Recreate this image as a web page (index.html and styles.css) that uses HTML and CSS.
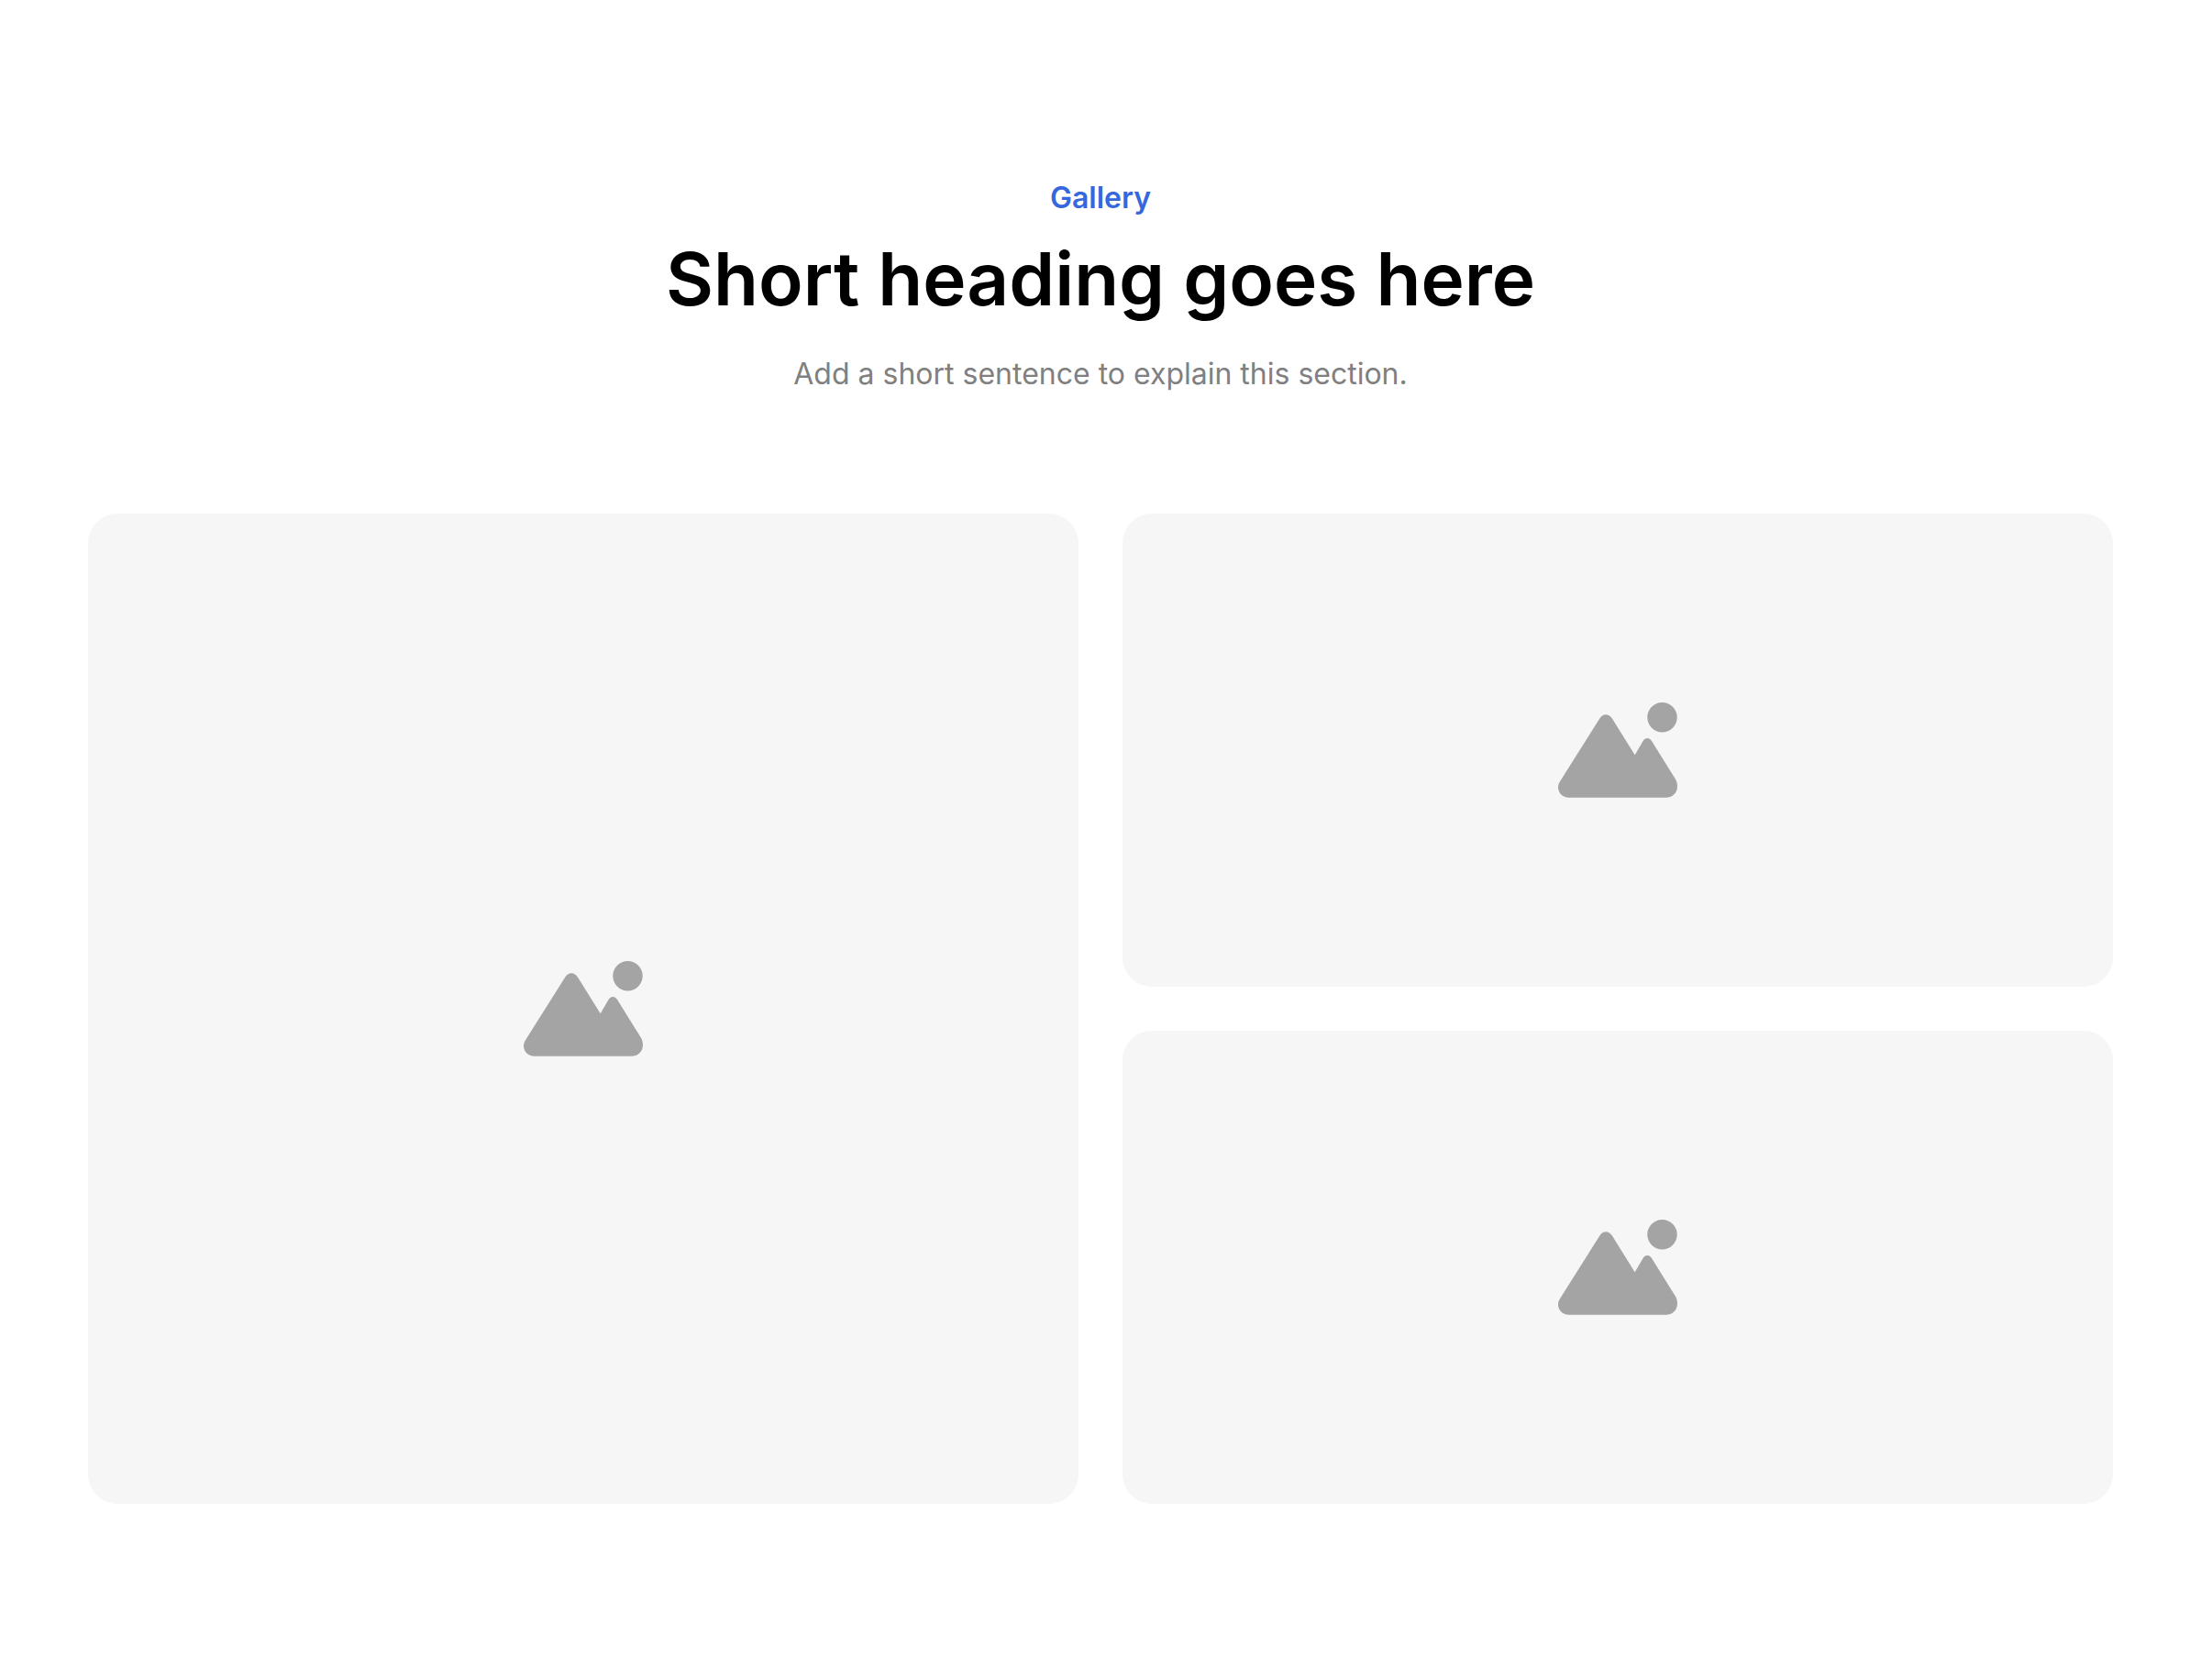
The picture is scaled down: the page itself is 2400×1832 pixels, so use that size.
FILE: index.html
```html
<!DOCTYPE html>
<html lang="en">

<head>
    <meta charset="UTF-8">
    <meta name="viewport" content="width=device-width, initial-scale=1.0">
    <link rel="stylesheet" href="styles.css">
    <title>Gallery</title>
</head>

<body>
    <!-- placeholder icon, reused by every tile -->
    <svg class="sprite" aria-hidden="true">
        <symbol id="picture" viewBox="0 0 130 104">
            <circle cx="113.5" cy="16.3" r="16.2" />
            <path d="M45 18C48.3 11.6 55.7 11.6 59.2 18L83.700 57.300L92.600 42C95 37.900 99.600 37.900 102 42L128 83.800C129.300 86.200 130 88.600 130 91.600C130 98.400 125 103.700 118.500 103.700H11.500C5 103.700 0 98.800 0 92.600C0 90.300 .6 88.500 1.800 86.500Z" />
        </symbol>
    </svg>

    <section class="gallery">
        <header class="gallery-header">
            <p class="eyebrow">Gallery</p>
            <h1>Short heading goes here</h1>
            <p class="description">Add a short sentence to explain this section.</p>
        </header>

        <div class="gallery-grid">
            <div class="tile tile-large">
                <svg class="icon" aria-hidden="true"><use href="#picture" /></svg>
            </div>
            <div class="tile">
                <svg class="icon" aria-hidden="true"><use href="#picture" /></svg>
            </div>
            <div class="tile">
                <svg class="icon" aria-hidden="true"><use href="#picture" /></svg>
            </div>
        </div>
    </section>
</body>

</html>
```

FILE: styles.css
```css
* {
    box-sizing: border-box;
}

body {
    margin: 0;
    font-family: Inter, "Liberation Sans", sans-serif;
    background-color: #ffffff;
    color: #000000;
}

.sprite {
    display: none;
}

.gallery {
    display: flex;
    flex-direction: column;
    gap: 128px;
    padding: 192px 96px;
}

.gallery-header {
    text-align: center;
}

.eyebrow,
.description {
    margin: 0;
    font-size: 32px;
    line-height: 48px;
}

.eyebrow {
    font-weight: 600;
    color: #3568dc;
}

h1 {
    margin: 16px 0 32px;
    font-size: 80px;
    font-weight: 600;
    line-height: 96px;
}

.description {
    color: #808080;
}

.gallery-grid {
    display: grid;
    grid-template-columns: 1fr 1fr;
    grid-template-rows: 1fr 1fr;
    gap: 48px;
}

.tile {
    display: flex;
    align-items: center;
    justify-content: center;
    border-radius: 32px;
    background-color: #f6f6f6;
}

/* square tile, sets the height of both rows */
.tile-large {
    grid-row: span 2;
    aspect-ratio: 1;
}

.icon {
    width: 130px;
    height: 104px;
    fill: #a4a4a4;
}
```
